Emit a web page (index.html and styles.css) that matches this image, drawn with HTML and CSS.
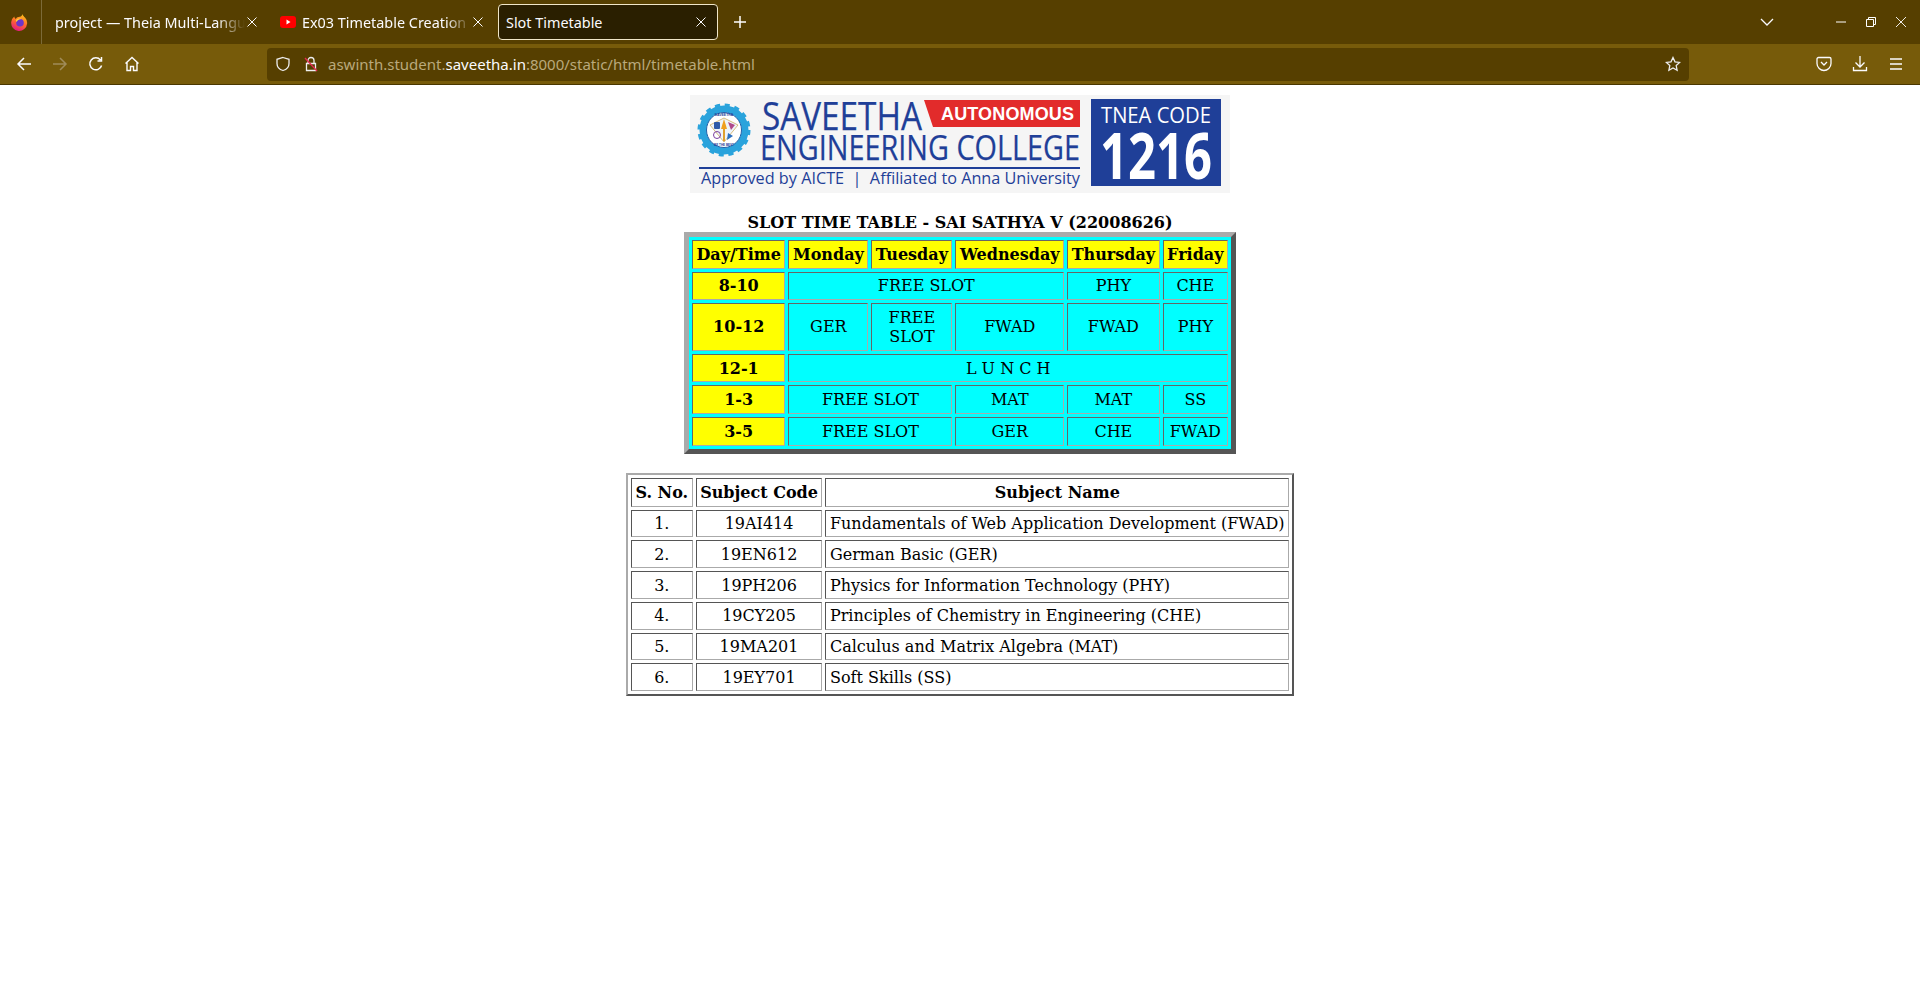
FILE: index.html
```html
<!DOCTYPE html>
<html lang="en">
<head>
<meta charset="utf-8">
<title>Slot Timetable</title>
<link rel="stylesheet" href="styles.css">
</head>
<body>
<header class="chrome">
  <div class="tabbar">
    <div class="ff-btn">
      <svg width="18" height="18" viewBox="0 0 18 18"><defs><linearGradient id="ffg" x1="0.700" y1="0" x2="0.300" y2="1"><stop offset="0" stop-color="#ffc21a"/><stop offset=".5" stop-color="#ff6a2c"/><stop offset="1" stop-color="#e31587"/></linearGradient></defs><path d="M11.500 1c.4 1.800 1.500 2.600 2.700 3.700A8 8 0 1 1 3.300 3.600C3.500 5 4 5.600 4.800 6 5.500 4.500 7 3.800 8.800 3.800 10.300 3.500 11.300 2.500 11.500 1z" fill="url(#ffg)"/><circle cx="9" cy="9.800" r="3.800" fill="#6c35c9"/><path d="M4.800 7.500C6 5.500 8.500 5 10.500 6 8.500 6.100 6.500 7 5.500 9z" fill="#ffd23a"/></svg>
    </div>
    <div class="tab tab-first"><span class="tab-title">project — Theia Multi-Language</span><svg class="tab-x" width="10" height="10" viewBox="0 0 10 10"><path d="M.5.500l9 9M9.500.500l-9 9" stroke="#fbfbfe"/></svg></div>
    <div class="tab tab-second">
      <svg class="favicon" width="16" height="12" viewBox="0 0 16 12"><rect width="16" height="12" rx="3" fill="#f00"/><path d="M6.500 3.500v5l4-2.500z" fill="#fff"/></svg>
      <span class="tab-title">Ex03 Timetable Creation</span><svg class="tab-x" width="10" height="10" viewBox="0 0 10 10"><path d="M.5.500l9 9M9.500.500l-9 9" stroke="#fbfbfe"/></svg>
    </div>
    <div class="tab tab-active"><span class="tab-title">Slot Timetable</span><svg class="tab-x" width="10" height="10" viewBox="0 0 10 10"><path d="M.5.500l9 9M9.500.500l-9 9" stroke="#fbfbfe"/></svg></div>
    <div class="newtab">
      <svg width="14" height="14" viewBox="0 0 14 14"><path d="M7 1v12M1 7h12" stroke="#fff" stroke-width="1.500"/></svg>
    </div>
    <div class="tabbar-space"></div>
    <svg class="alltabs" width="14" height="8" viewBox="0 0 14 8"><path d="M1 1l6 6 6-6" fill="none" stroke="#fbfbfe" stroke-width="1.300"/></svg>
    <div class="winbtns">
      <svg width="10" height="2" viewBox="0 0 10 2"><path d="M0 1h10" stroke="#fff"/></svg>
      <svg width="10" height="10" viewBox="0 0 10 10"><path d="M.5 2.500h7v7h-7zM2.500 2.500v-2h7v7h-2" fill="none" stroke="#fff"/></svg>
      <svg width="10" height="10" viewBox="0 0 10 10"><path d="M0 0l10 10M10 0L0 10" stroke="#fff" stroke-width=".9"/></svg>
    </div>
  </div>
  <div class="toolbar">
    <div class="navbtns">
      <svg width="16" height="16" viewBox="0 0 16 16"><path d="M15 8H2M8 2L2 8l6 6" fill="none" stroke="#fbfbfe" stroke-width="1.500"/></svg>
      <svg width="16" height="16" viewBox="0 0 16 16"><path d="M1 8h13M8 2l6 6-6 6" fill="none" stroke="#a08c5a" stroke-width="1.500"/></svg>
      <svg width="16" height="16" viewBox="0 0 16 16"><path d="M13.600 9.500A6 6 0 1 1 12.500 4M13.500 1v4h-4" fill="none" stroke="#fbfbfe" stroke-width="1.500"/></svg>
      <svg width="16" height="16" viewBox="0 0 16 16"><path d="M1.500 7.500L8 1.500l6.500 6M3 6.500v8h3.500v-4h3v4H13v-8" fill="none" stroke="#fbfbfe" stroke-width="1.400"/></svg>
    </div>
    <div class="urlbar">
      <svg width="16" height="16" viewBox="0 0 16 16"><path d="M8 1.500l6 1.800v4.200c0 3.500-2.500 6-6 7-3.500-1-6-3.500-6-7V3.300z" fill="none" stroke="#eee" stroke-width="1.300"/></svg>
      <svg class="lock" width="16" height="16" viewBox="0 0 16 16"><path d="M5 7V4.500a3 3 0 0 1 6 0V7M3.500 7.500h9v7h-9z" fill="none" stroke="#eee" stroke-width="1.300"/><path d="M2 2l12 13" stroke="#e22850" stroke-width="1.300"/></svg>
      <div class="url"><span class="dim">aswinth.student.</span>saveetha.in<span class="dim">:8000/static/html/timetable.html</span></div>
      <svg width="16" height="16" viewBox="0 0 16 16"><path d="M8 1.500l2 4.300 4.700.6-3.500 3.200.9 4.700L8 12l-4.100 2.300.9-4.700L1.300 6.400 6 5.800z" fill="none" stroke="#eee" stroke-width="1.300"/></svg>
    </div>
    <div class="toolbtns">
      <svg width="16" height="16" viewBox="0 0 16 16"><path d="M2.500 1.500h11a1.500 1.500 0 0 1 1.500 1.500v4.500c0 4-3.500 7-7 7s-7-3-7-7V3a1.500 1.500 0 0 1 1.500-1.500z" fill="none" stroke="#fbfbfe" stroke-width="1.300"/><path d="M5 6l3 3 3-3" fill="none" stroke="#fbfbfe" stroke-width="1.300"/></svg>
      <svg width="16" height="16" viewBox="0 0 16 16"><path d="M8 0v11M3.500 6.500L8 11l4.500-4.500M1.500 11v3.500h13V11" fill="none" stroke="#fbfbfe" stroke-width="1.300"/></svg>
      <svg width="16" height="16" viewBox="0 0 16 16"><path d="M2 3h12M2 8h12M2 13h12" stroke="#fbfbfe" stroke-width="1.400"/></svg>
    </div>
  </div>
</header>
<main class="page">
  <svg class="logo" width="540" height="98" viewBox="0 0 540 98" role="img" aria-label="Saveetha Engineering College logo">
    <rect width="540" height="98" fill="#f5f5f5"/>
    <circle cx="34" cy="35" r="21" fill="none" stroke="#2aa3dc" stroke-width="7"/>
    <circle cx="34" cy="35" r="24.500" fill="none" stroke="#2aa3dc" stroke-width="4" stroke-dasharray="5 4.620"/>
    <circle cx="34" cy="35" r="17.500" fill="#fff" stroke="#1f5fa8"/>
    <path d="M20 30l14-7 14 7-14 17z" fill="#eef4fa" stroke="#c9a24a" stroke-width=".7"/>
    <rect x="24" y="27" width="6" height="7" rx="1" fill="#2f5aa8"/>
    <path d="M34 24l3 10h-6z" fill="#f0a020"/>
    <path d="M38 27l7 3-4 5z" fill="#b04a8a"/>
    <circle cx="27" cy="40" r="3.500" fill="none" stroke="#7a3fa0"/>
    <path d="M38 38l5 3-6 4z" fill="#2a6fc0"/>
    <path d="M34 34v12" stroke="#e0a030" stroke-width="2"/>
    <text class="logo-tiny" x="34" y="21" font-size="3.500" text-anchor="middle">SAVEETHA</text>
    <text class="logo-tiny" x="34" y="51" font-size="3" text-anchor="middle">BE THE BEST</text>
    <text class="logo-thin" x="72" y="35" font-size="38" textLength="160" lengthAdjust="spacingAndGlyphs">SAVEETHA</text>
    <path d="M234 5h156v27H243z" fill="#e22b2b"/>
    <text class="logo-bold" x="251" y="25" font-size="18" textLength="133" lengthAdjust="spacing">AUTONOMOUS</text>
    <text class="logo-thin" x="70" y="65" font-size="35" textLength="320" lengthAdjust="spacingAndGlyphs">ENGINEERING COLLEGE</text>
    <rect x="9" y="72" width="381" height="2" fill="#1f3f98"/>
    <text class="logo-sub" x="11" y="89" font-size="16" textLength="379" lengthAdjust="spacingAndGlyphs">Approved by AICTE  |  Affiliated to Anna University</text>
    <rect x="401" y="4" width="130" height="87" fill="#1f3f98"/>
    <text class="logo-white" x="411" y="28" font-size="22" textLength="110" lengthAdjust="spacingAndGlyphs">TNEA CODE</text>
    <text class="logo-num" x="410" y="84" font-size="64" textLength="112" lengthAdjust="spacingAndGlyphs">1216</text>
  </svg>
  <table class="slots">
    <caption>SLOT TIME TABLE - SAI SATHYA V (22008626)</caption>
    <tr><th>Day/Time</th><th>Monday</th><th>Tuesday</th><th>Wednesday</th><th>Thursday</th><th>Friday</th></tr>
    <tr><th>8-10</th><td colspan="3">FREE SLOT</td><td>PHY</td><td>CHE</td></tr>
    <tr><th>10-12</th><td>GER</td><td>FREE<br>SLOT</td><td>FWAD</td><td>FWAD</td><td>PHY</td></tr>
    <tr><th>12-1</th><td colspan="5">L U N C H</td></tr>
    <tr><th>1-3</th><td colspan="2">FREE SLOT</td><td>MAT</td><td>MAT</td><td>SS</td></tr>
    <tr><th>3-5</th><td colspan="2">FREE SLOT</td><td>GER</td><td>CHE</td><td>FWAD</td></tr>
  </table>
  <table class="subjects">
    <tr><th>S. No.</th><th>Subject Code</th><th>Subject Name</th></tr>
    <tr><td>1.</td><td>19AI414</td><td class="name">Fundamentals of Web Application Development (FWAD)</td></tr>
    <tr><td>2.</td><td>19EN612</td><td class="name">German Basic (GER)</td></tr>
    <tr><td>3.</td><td>19PH206</td><td class="name">Physics for Information Technology (PHY)</td></tr>
    <tr><td>4.</td><td>19CY205</td><td class="name">Principles of Chemistry in Engineering (CHE)</td></tr>
    <tr><td>5.</td><td>19MA201</td><td class="name">Calculus and Matrix Algebra (MAT)</td></tr>
    <tr><td>6.</td><td>19EY701</td><td class="name">Soft Skills (SS)</td></tr>
  </table>
</main>
</body>
</html>
```
FILE: styles.css
```css
* { box-sizing: border-box; }
html, body { margin: 0; height: 100%; background: #fff; overflow: hidden; }
body { font-family: "DejaVu Serif", serif; font-size: 16px; color: #000; }

.chrome { font-family: "Noto Sans", sans-serif; color: #fbfbfe; }
.tabbar { height: 44px; background: #563f00; display: flex; align-items: center; }
.ff-btn { width: 42px; height: 44px; border-right: 1px solid #7c6a38; display: flex; align-items: center; justify-content: center; padding-right: 2px; }
.tab { height: 36px; display: flex; align-items: center; font-size: 14.400px; white-space: nowrap; flex: none; }
.tab-first { width: 225px; padding: 0 8px 0 13px; margin-right: 14px; }
.tab-second { width: 225px; padding: 0 8px 0 12px; margin-left: -13px; }
.favicon { flex: none; margin-right: 6px; }
.tab-active { width: 220px; margin-left: 5px; padding: 0 9px 0 7px; background: #2a1f00; border: 1px solid #f0e6c8; border-radius: 4px; }
.tab-title { flex: 1; overflow: hidden; min-width: 0; -webkit-mask-image: linear-gradient(to right, #000 85%, transparent); mask-image: linear-gradient(to right, #000 85%, transparent); }
.tab-active .tab-title { -webkit-mask-image: none; mask-image: none; }
.tab-x { flex: none; margin: 0 2px; }
.newtab { width: 44px; display: flex; justify-content: center; }
.tabbar-space { flex: 1; }
.alltabs { margin-right: 62px; }
.winbtns { display: flex; align-items: center; gap: 20px; margin-right: 14px; width: 70px; justify-content: space-between; }

.toolbar { height: 41px; background: #775b0a; border-bottom: 1px solid #4a3700; display: flex; align-items: center; padding: 0 8px 0 16px; }
.navbtns { display: flex; gap: 20px; width: 251px; flex: none; }
.urlbar { width: 1422px; height: 33px; background: #563f00; border-radius: 4px; display: flex; align-items: center; padding: 0 8px; flex: none; gap: 12px; }
.url { flex: 1; font-size: 15px; color: #fbfbfe; margin-left: -3px; white-space: nowrap; }
.dim { color: #b9a97c; }
.toolbtns { display: flex; gap: 20px; margin-left: auto; padding-right: 8px; }

.page { display: flex; flex-direction: column; align-items: center; }
.logo { display: block; margin-top: 10px; margin-bottom: 20px; }
.logo-thin { font-family: "Open Sans", sans-serif; fill: #1f3f98; font-weight: 500; stroke: #1f3f98; stroke-width: .25px; }
.logo-bold { font-family: "Liberation Sans", sans-serif; font-weight: 700; fill: #fff; }
.logo-sub { font-family: "Open Sans", sans-serif; fill: #1f3f98; white-space: pre; font-weight: 500; }
.logo-white { font-family: "Open Sans", sans-serif; fill: #fff; }
.logo-num { font-family: "Open Sans", sans-serif; font-weight: 700; fill: #fff; }
.logo-tiny { font-family: "Liberation Sans", sans-serif; font-weight: 700; fill: #1f3f98; }

table { border-collapse: separate; flex: none; }
caption { font-weight: 700; font-size: 16px; line-height: 19px; }
.slots { border: 5px solid; border-color: #aaa #555 #555 #aaa; background: #0ff; border-spacing: 3px; }
.slots th, .slots td { border: 1px solid; border-color: #666 #aaa #aaa #666; padding: 3.800px 3.500px; text-align: center; }
.slots th { background: #ff0; }

.subjects { margin-top: 19px; border: 2px solid; border-color: #aaa #555 #555 #aaa; border-spacing: 3px; }
.subjects th, .subjects td { border: 1px solid; border-color: #555 #aaa #aaa #555; padding: 4px 3.500px; text-align: center; }
.subjects td { padding-top: 3.400px; padding-bottom: 3.400px; }
.subjects .name { text-align: left; }
```
